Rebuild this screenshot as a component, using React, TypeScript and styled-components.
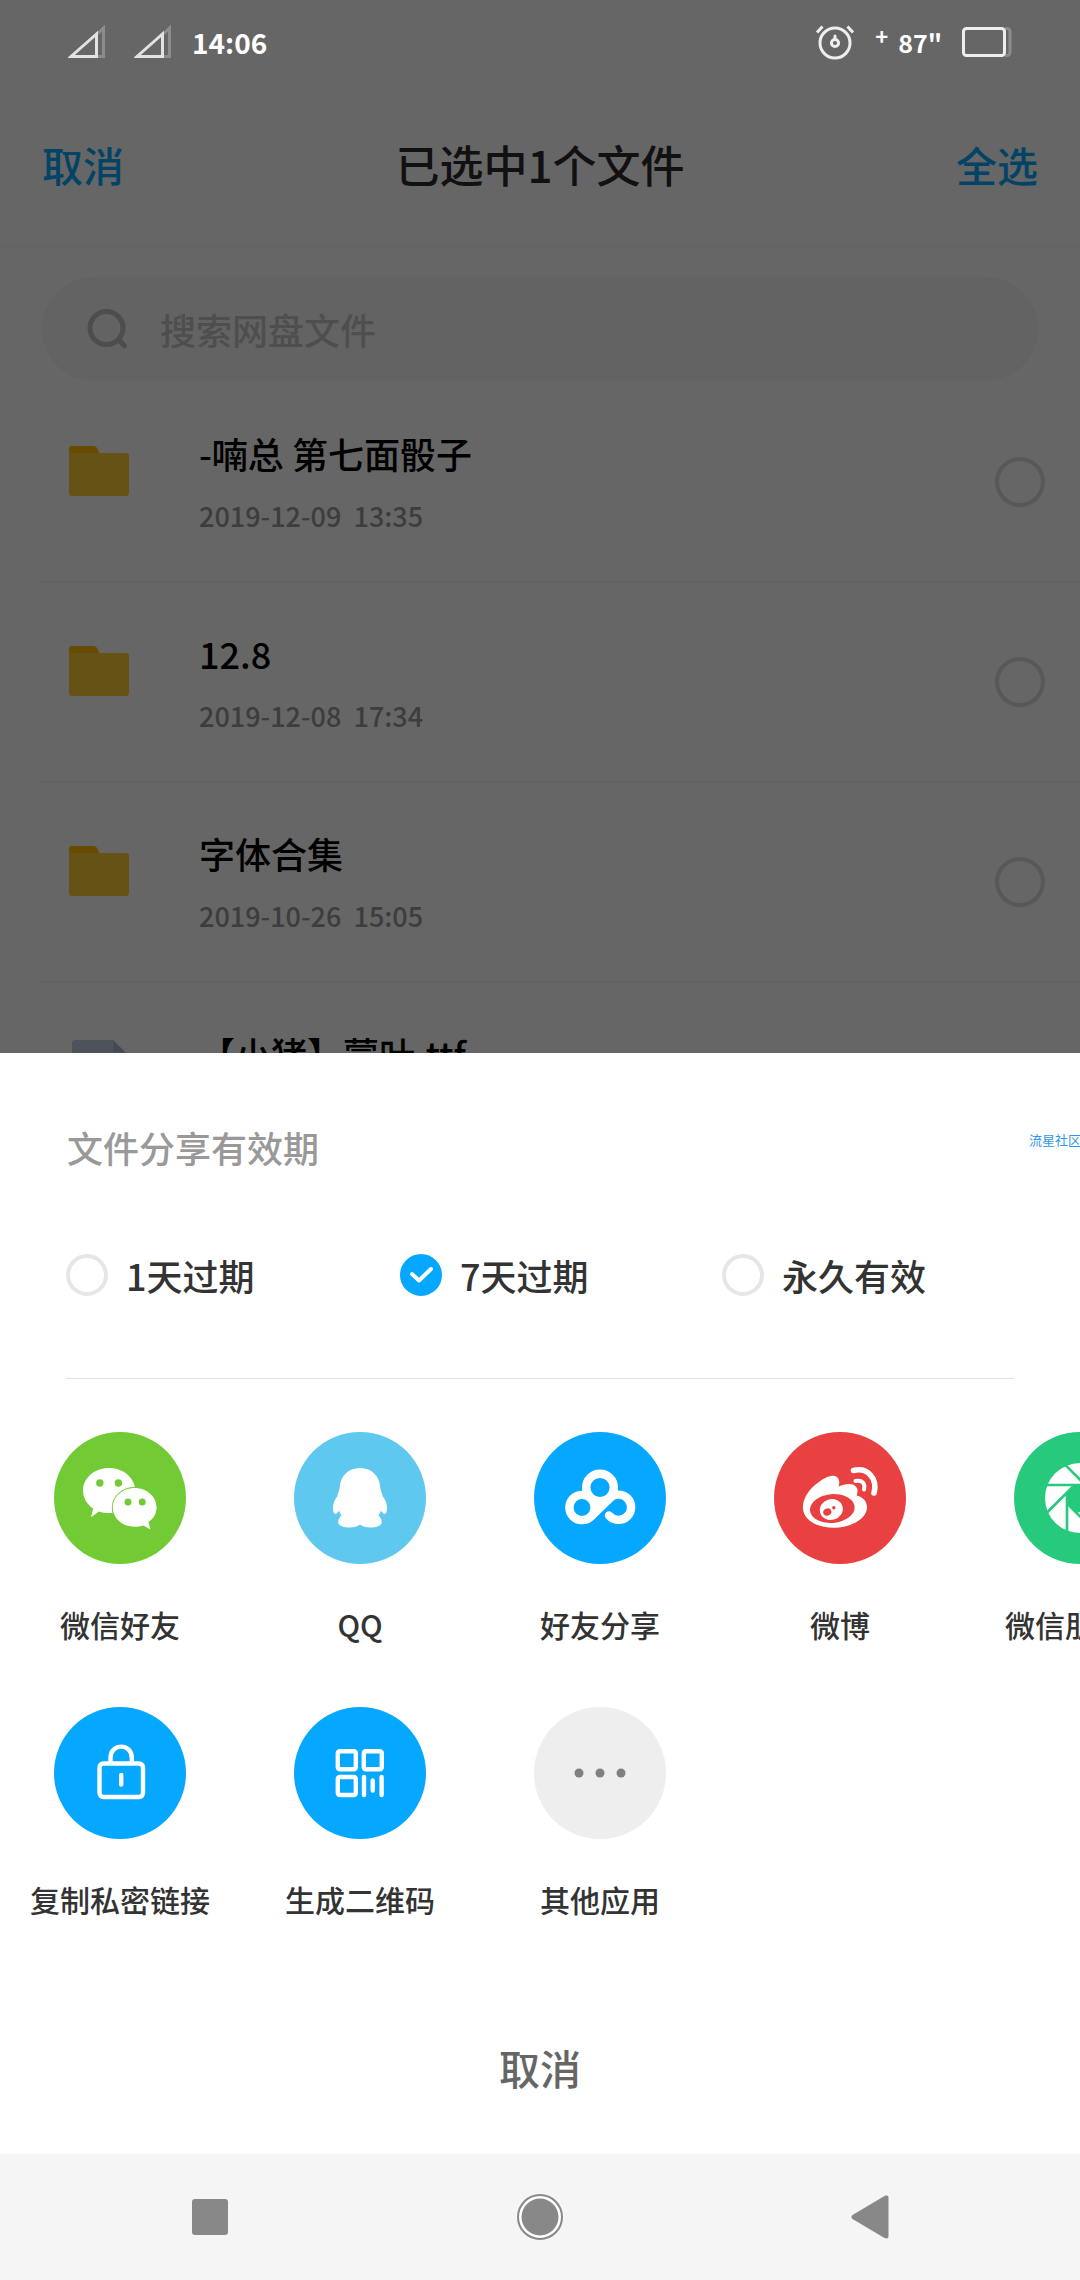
import React, { useState } from 'react';
import styled, { createGlobalStyle } from 'styled-components';

const BLUE = '#06a7ff';

const GlobalStyle = createGlobalStyle`
  * {
    box-sizing: border-box;
  }
  body {
    margin: 0;
    background: #fff;
    font-family: 'Noto Sans CJK SC', 'Noto Sans', sans-serif;
    font-weight: 500;
  }
  button, input {
    font: inherit;
    color: inherit;
    margin: 0;
    padding: 0;
    border: 0;
    background: none;
  }
`;

const Page = styled.div`
  display: flex;
  flex-direction: column;
  height: 100vh;
  overflow: hidden;
`;

/* File browser, dimmed by a scrim while the sheet is open */
const Browser = styled.main`
  position: relative;
  flex: 1 1 0;
  min-height: 0;
  overflow: hidden;
  background: #fff;

  &::after {
    content: '';
    position: absolute;
    inset: 0;
    background: rgba(0, 0, 0, 0.6);
    pointer-events: none;
  }
`;

const StatusBar = styled.div`
  position: relative;
  z-index: 1;
  display: flex;
  align-items: center;
  justify-content: space-between;
  height: 84px;
  padding: 0 68px;
  color: #fff;
  font-weight: 700;
`;

const StatusGroup = styled.div<{ $gap: number }>`
  display: flex;
  align-items: center;
  gap: ${(p) => p.$gap}px;
`;

const Clock = styled.span`
  font-size: 28px;
  line-height: 40px;
`;

const Battery = styled.span`
  font-size: 25px;
  line-height: 40px;
`;

const Charge = styled.sup`
  align-self: flex-start;
  font-size: 22px;
  line-height: 26px;
`;

const Header = styled.header`
  display: grid;
  grid-template-columns: 1fr auto 1fr;
  align-items: center;
  height: 164px;
  padding: 0 42px 2px;
  border-bottom: 2px solid #fafafa;
`;

const HeaderButton = styled.button<{ $end?: boolean }>`
  justify-self: ${(p) => (p.$end ? 'end' : 'start')};
  font-size: 41px;
  line-height: 60px;
  color: ${BLUE};
`;

const Title = styled.h1`
  margin: 0;
  font-size: 44px;
  font-weight: 500;
  line-height: 64px;
  color: #2b2b2b;
`;

const SearchBox = styled.label`
  display: flex;
  align-items: center;
  gap: 30px;
  height: 104px;
  margin: 29px 42px 2px;
  padding: 0 44px;
  border-radius: 52px;
  background: #f7f7f7;
`;

const SearchInput = styled.input`
  flex: 1;
  min-width: 0;
  height: 60px;
  font-size: 36px;
  outline: none;

  &::placeholder {
    color: #c4c4c4;
    opacity: 1;
  }
`;

const FileList = styled.ul`
  margin: 0;
  padding: 0 0 0 42px;
  list-style: none;
`;

const FileRow = styled.li`
  display: flex;
  height: 200px;
  padding: 0 35px 0 26px;
  border-bottom: 2px solid #f4f4f4;
`;

const FileIconBox = styled.div`
  display: flex;
  flex: none;
  align-items: center;
  width: 131px;
  height: 62px;
  margin-top: 57px;
`;

const FileText = styled.div`
  flex: 1;
  padding-top: 44px;
`;

const FileName = styled.div`
  font-size: 36px;
  line-height: 52px;
  color: #000;
`;

const FileDate = styled.time`
  display: block;
  margin-top: 17px;
  font-size: 27px;
  line-height: 40px;
  color: #999;
  white-space: pre;
`;

const FileCheck = styled.input`
  appearance: none;
  align-self: center;
  width: 50px;
  height: 50px;
  border: 4px solid #dcdcdc;
  border-radius: 50%;

  &:checked {
    border-color: ${BLUE};
    background: ${BLUE};
  }
`;

/* Share sheet */
const Sheet = styled.section`
  position: relative;
  flex: none;
  padding-top: 68px;
  background: #fff;
`;

const Watermark = styled.span`
  position: absolute;
  top: 77px;
  right: -1px;
  font-size: 13px;
  font-weight: 400;
  line-height: 20px;
  color: #2f95f0;
`;

const Expiry = styled.fieldset`
  margin: 0 66px;
  padding: 0 0 77px;
  border: 0;
  border-bottom: 1px solid #e2e2e2;
`;

const ExpiryTitle = styled.legend`
  padding: 0 1px;
  font-size: 36px;
  line-height: 52px;
  color: #999;
`;

const ExpiryOptions = styled.div`
  display: grid;
  grid-template-columns: 334fr 322fr 292fr;
  padding-top: 76px;
`;

const ExpiryOption = styled.label`
  display: flex;
  align-items: center;
  gap: 18px;
  font-size: 36px;
  line-height: 52px;
  color: #333;
`;

const RadioMark = styled.span`
  display: grid;
  width: 42px;
  height: 42px;

  > * {
    grid-area: 1 / 1;
  }
`;

const Radio = styled.input`
  appearance: none;
  width: 42px;
  height: 42px;
  border: 4px solid #e6e6e6;
  border-radius: 50%;

  &:checked {
    border-color: ${BLUE};
    background: ${BLUE};
  }
`;

const Tick = styled.svg`
  z-index: 1;
  pointer-events: none;
`;

const Targets = styled.div`
  display: flex;
  flex-direction: column;
  gap: 61px;
  padding-top: 53px;
  overflow: hidden;
`;

const TargetRow = styled.div`
  display: flex;
`;

const Target = styled.button`
  display: flex;
  flex: none;
  flex-direction: column;
  align-items: center;
  gap: 38px;
  width: 240px;
  font-size: 30px;
  line-height: 44px;
  color: #333;
  white-space: nowrap;
  cursor: pointer;
`;

const Disc = styled.span<{ $color: string }>`
  display: block;
  width: 132px;
  height: 132px;
  border-radius: 50%;
  background: ${(p) => p.$color};
`;

const CancelButton = styled.button`
  display: block;
  width: 100%;
  margin-top: 62px;
  padding: 54px 0 57px;
  font-size: 41px;
  line-height: 60px;
  color: #666;
  cursor: pointer;
`;

const NavBar = styled.nav`
  display: flex;
  flex: none;
  justify-content: center;
  height: 126px;
  padding: 0 45px;
  background: #f5f5f5;
`;

const NavButton = styled.button`
  display: flex;
  flex: 1;
  align-items: center;
  justify-content: center;
`;

const SignalIcon = () => (
  <svg width="38" height="34" viewBox="0 0 38 34" fill="none" aria-hidden="true">
    <path d="M30 8.500 35.500 3V31.500H30" stroke="#8c8c8c" strokeWidth="3" />
    <path d="M3 31.500H28.500V9Z" stroke="#e2e2e2" strokeWidth="3" />
  </svg>
);

const AlarmIcon = () => (
  <svg width="40" height="36" viewBox="0 0 40 36" fill="none" stroke="#eee" strokeWidth="3" aria-hidden="true">
    <circle cx="20" cy="19" r="15" />
    <circle cx="20" cy="19" r="3.600" />
    <path d="M20 15V12" strokeLinecap="round" />
    <path d="M2 8.500 7.500 2.500M38 8.500 32.500 2.500" />
  </svg>
);

const BatteryIcon = () => (
  <svg width="50" height="32" viewBox="0 0 50 32" fill="none" strokeWidth="3" aria-hidden="true">
    <path d="M43 2.500h2a3 3 0 0 1 3 3v21a3 3 0 0 1-3 3h-2" stroke="#8c8c8c" />
    <rect x="1.500" y="2.500" width="41" height="27" rx="3" stroke="#eee" />
  </svg>
);

const SearchIcon = () => (
  <svg width="44" height="42" viewBox="0 0 44 42" fill="none" stroke="#c0c0c0" strokeWidth="5" strokeLinecap="round" aria-hidden="true">
    <circle cx="20.500" cy="20" r="16.500" />
    <path d="M34 33 38.500 38" />
  </svg>
);

const FolderIcon = () => (
  <svg width="62" height="52" viewBox="0 0 62 52" aria-hidden="true">
    <path d="M1 8V4a3 3 0 0 1 3-3H25c4 0 5 3 6 7V14H1Z" fill="#ffbc00" />
    <path d="M1 8H58a3 3 0 0 1 3 3V48a3 3 0 0 1-3 3H4a3 3 0 0 1-3-3Z" fill="#ffcd32" />
  </svg>
);

const DocIcon = () => (
  <svg width="62" height="62" viewBox="0 0 62 62" aria-hidden="true">
    <path d="M4 3a3 3 0 0 1 3-3H45L57 12V59a3 3 0 0 1-3 3H7a3 3 0 0 1-3-3Z" fill="#c3cfe4" />
    <path d="M45 0 57 12H45Z" fill="#a9b8d3" />
  </svg>
);

const Glyph = ({ children }: { children: React.ReactNode }) => (
  <svg width="132" height="132" viewBox="0 0 132 132" fill="none" aria-hidden="true">
    {children}
  </svg>
);

const WechatGlyph = () => (
  <Glyph>
    <path d="M55 36C69.400 36 81.200 46 81.200 58.500S69.400 81 55 81C51.500 81 48 80.500 45 79.500L37 85.300 39.200 76.500C33 72.500 29 66 29 58.500 29 46 40.600 36 55 36Z" fill="#fff" />
    <circle cx="45.800" cy="51" r="3.700" fill="#72cb34" />
    <circle cx="64.400" cy="51" r="3.700" fill="#72cb34" />
    <path d="M80.700 56C92.800 56 102.600 64.600 102.600 75.400 102.600 81.500 99.500 86.500 94.400 90L96.400 97.500 89.500 93.500C86.700 94.400 84 94.800 80.700 94.800 68.600 94.800 58.800 86.200 58.800 75.400S68.600 56 80.700 56Z" fill="#fff" stroke="#72cb34" strokeWidth="2" paintOrder="stroke" />
    <circle cx="74" cy="70" r="3.500" fill="#72cb34" />
    <circle cx="88.200" cy="70" r="3.500" fill="#72cb34" />
  </Glyph>
);

const QQGlyph = () => (
  <Glyph>
    <path d="M66 36C78 36 86 44.500 86.300 56 86.500 59 88.500 61 88.500 64 91 67 93 71 93 75.500 93 79 92.200 82 90.800 82 89 82 88 80 87 78.500 86.500 80 85.500 82 84.500 83.500 86.500 85 87.800 87.500 87.800 90 87.800 93.500 83 95.500 77 95.500 72 95.500 68 94.500 66 92.500 64 94.500 60 95.500 55 95.500 49 95.500 44.200 93.500 44.200 90 44.200 87.500 45.500 85 47.500 83.500 46.500 82 45.500 80 45 78.500 44 80 43 82 41.200 82 39.800 82 39 79 39 75.500 39 71 41 67 43.500 64 43.500 61 45.500 59 45.700 56 46 44.500 54 36 66 36Z" fill="#fff" />
  </Glyph>
);

const NetdiskGlyph = () => (
  <Glyph>
    <g stroke="#fff" strokeWidth="8.400" strokeLinecap="round">
      <circle cx="66" cy="55.500" r="13.800" />
      <circle cx="48" cy="75.500" r="12.600" />
      <path d="M75 83.500A12.600 12.600 0 1 0 75 67L57 84.500" />
    </g>
  </Glyph>
);

const WeiboGlyph = () => (
  <Glyph>
    <path d="M28.900 75.500C28.900 67 34 59 41 53 48 47 56 42.500 61 44 65 45.500 66 49 64.800 54.500 69 52.500 74.500 51 79 52.500 83.500 54.500 84.500 58 82.800 63.500 89 65.500 93 69 93 75.500 93 86 78 95.800 60 95.800 42 95.800 28.900 87.500 28.900 75.500Z" fill="#fff" />
    <ellipse cx="58.300" cy="76.600" rx="22.400" ry="14.400" transform="rotate(-5 58.300 76.600)" fill="#e94141" />
    <ellipse cx="57.300" cy="77.500" rx="11.600" ry="10.400" transform="rotate(-15 57.300 77.500)" fill="#fff" />
    <ellipse cx="53.300" cy="80" rx="4.200" ry="3.500" transform="rotate(-25 53.300 80)" fill="#e94141" />
    <circle cx="59.800" cy="75.700" r="1.700" fill="#e94141" />
    <g stroke="#fff" strokeLinecap="round">
      <path d="M79.500 38.500C93 35 104 46 100 61" strokeWidth="5.600" />
      <path d="M81.500 49C88 47.500 91.500 51.500 90 57.500" strokeWidth="4" />
    </g>
  </Glyph>
);

const BLADES = [0, 45, 90, 135, 180, 225, 270, 315];

const MomentsGlyph = () => (
  <Glyph>
    <circle cx="66" cy="66" r="35" fill="#fff" />
    <path d="M60.600 53H71.400L79 60.600V71.400L71.400 79H60.600L53 71.400V60.600Z" fill="#27c97c" />
    {BLADES.map((angle) => (
      <path key={angle} d="M71.400 53H30" stroke="#27c97c" strokeWidth="2.600" transform={`rotate(${angle} 66 66)`} />
    ))}
  </Glyph>
);

const LockGlyph = () => (
  <Glyph>
    <g stroke="#fff" strokeWidth="4.400" strokeLinecap="round">
      <rect x="45.500" y="56.500" width="43.500" height="33.500" rx="4" />
      <path d="M56.500 56V51C56.500 35.800 77.800 35.800 77.800 51V56" />
      <path d="M67.200 68V77.500" />
    </g>
  </Glyph>
);

const QrGlyph = () => (
  <Glyph>
    <g stroke="#fff" strokeWidth="4.400" strokeLinecap="round">
      <rect x="43.800" y="44.200" width="18" height="18" rx="2" />
      <rect x="69.800" y="44.200" width="18" height="18" rx="2" />
      <rect x="43.800" y="70" width="18" height="18" rx="2" />
      <path d="M70 70V88M78.700 73.500V83.500M87.600 70V88" />
    </g>
  </Glyph>
);

const MoreGlyph = () => (
  <Glyph>
    <circle cx="45" cy="66" r="4.500" fill="#808080" />
    <circle cx="66" cy="66" r="4.500" fill="#808080" />
    <circle cx="87" cy="66" r="4.500" fill="#808080" />
  </Glyph>
);

const files = [
  { name: '-喃总 第七面骰子', date: '2019-12-09  13:35', icon: <FolderIcon /> },
  { name: '12.8', date: '2019-12-08  17:34', icon: <FolderIcon /> },
  { name: '字体合集', date: '2019-10-26  15:05', icon: <FolderIcon /> },
  { name: '【小猪】蒙叶.ttf', date: '', icon: <DocIcon /> },
];

const periods = ['1天过期', '7天过期', '永久有效'];

const targetRows = [
  [
    { label: '微信好友', color: '#72cb34', glyph: <WechatGlyph /> },
    { label: 'QQ', color: '#5fc8ef', glyph: <QQGlyph /> },
    { label: '好友分享', color: BLUE, glyph: <NetdiskGlyph /> },
    { label: '微博', color: '#e94141', glyph: <WeiboGlyph /> },
    { label: '微信朋友圈', color: '#27c97c', glyph: <MomentsGlyph /> },
  ],
  [
    { label: '复制私密链接', color: BLUE, glyph: <LockGlyph /> },
    { label: '生成二维码', color: BLUE, glyph: <QrGlyph /> },
    { label: '其他应用', color: '#eeeeee', glyph: <MoreGlyph /> },
  ],
];

export default function App() {
  const [period, setPeriod] = useState('7天过期');

  return (
    <Page>
      <GlobalStyle />
      <Browser>
        <StatusBar>
          <StatusGroup $gap={20}>
            <StatusGroup $gap={28}>
              <SignalIcon />
              <SignalIcon />
            </StatusGroup>
            <Clock>14:06</Clock>
          </StatusGroup>
          <StatusGroup $gap={20}>
            <AlarmIcon />
            <StatusGroup $gap={10}>
              <Charge>+</Charge>
              <Battery>87"</Battery>
            </StatusGroup>
            <BatteryIcon />
          </StatusGroup>
        </StatusBar>
        <Header>
          <HeaderButton type="button">取消</HeaderButton>
          <Title>已选中1个文件</Title>
          <HeaderButton type="button" $end>全选</HeaderButton>
        </Header>
        <SearchBox>
          <SearchIcon />
          <SearchInput type="text" placeholder="搜索网盘文件" aria-label="搜索网盘文件" />
        </SearchBox>
        <FileList>
          {files.map((file) => (
            <FileRow key={file.name}>
              <FileIconBox>{file.icon}</FileIconBox>
              <FileText>
                <FileName>{file.name}</FileName>
                {file.date && <FileDate>{file.date}</FileDate>}
              </FileText>
              <FileCheck type="checkbox" aria-label={file.name} />
            </FileRow>
          ))}
        </FileList>
      </Browser>

      <Sheet>
        <Watermark>流星社区</Watermark>
        <Expiry>
          <ExpiryTitle>文件分享有效期</ExpiryTitle>
          <ExpiryOptions>
            {periods.map((label) => (
              <ExpiryOption key={label}>
                <RadioMark>
                  <Radio type="radio" name="period" checked={period === label} onChange={() => setPeriod(label)} />
                  {period === label && (
                    <Tick width="42" height="42" viewBox="0 0 42 42" fill="none" aria-hidden="true">
                      <path d="M12 20 19 26.500 31 15" stroke="#fff" strokeWidth="4" strokeLinecap="round" strokeLinejoin="round" />
                    </Tick>
                  )}
                </RadioMark>
                {label}
              </ExpiryOption>
            ))}
          </ExpiryOptions>
        </Expiry>
        <Targets>
          {targetRows.map((row) => (
            <TargetRow key={row[0].label}>
              {row.map((target) => (
                <Target key={target.label} type="button">
                  <Disc $color={target.color}>{target.glyph}</Disc>
                  {target.label}
                </Target>
              ))}
            </TargetRow>
          ))}
        </Targets>
        <CancelButton type="button">取消</CancelButton>
      </Sheet>

      <NavBar>
        <NavButton type="button" aria-label="最近任务">
          <svg width="36" height="36" viewBox="0 0 36 36" aria-hidden="true">
            <rect width="36" height="36" rx="3" fill="#888" />
          </svg>
        </NavButton>
        <NavButton type="button" aria-label="主屏幕">
          <svg width="46" height="46" viewBox="0 0 46 46" aria-hidden="true">
            <circle cx="23" cy="23" r="22" fill="#fff" stroke="#888" strokeWidth="2" />
            <circle cx="23" cy="23" r="18.500" fill="#888" />
          </svg>
        </NavButton>
        <NavButton type="button" aria-label="返回">
          <svg width="38" height="44" viewBox="0 0 38 44" aria-hidden="true">
            <path d="M1.500 20 33.500 1C36 0 37.500 0.500 37.500 3V41C37.500 43.500 36 44 33.500 43L1.500 24C0 23 0 21 1.500 20Z" fill="#888" />
          </svg>
        </NavButton>
      </NavBar>
    </Page>
  );
}
